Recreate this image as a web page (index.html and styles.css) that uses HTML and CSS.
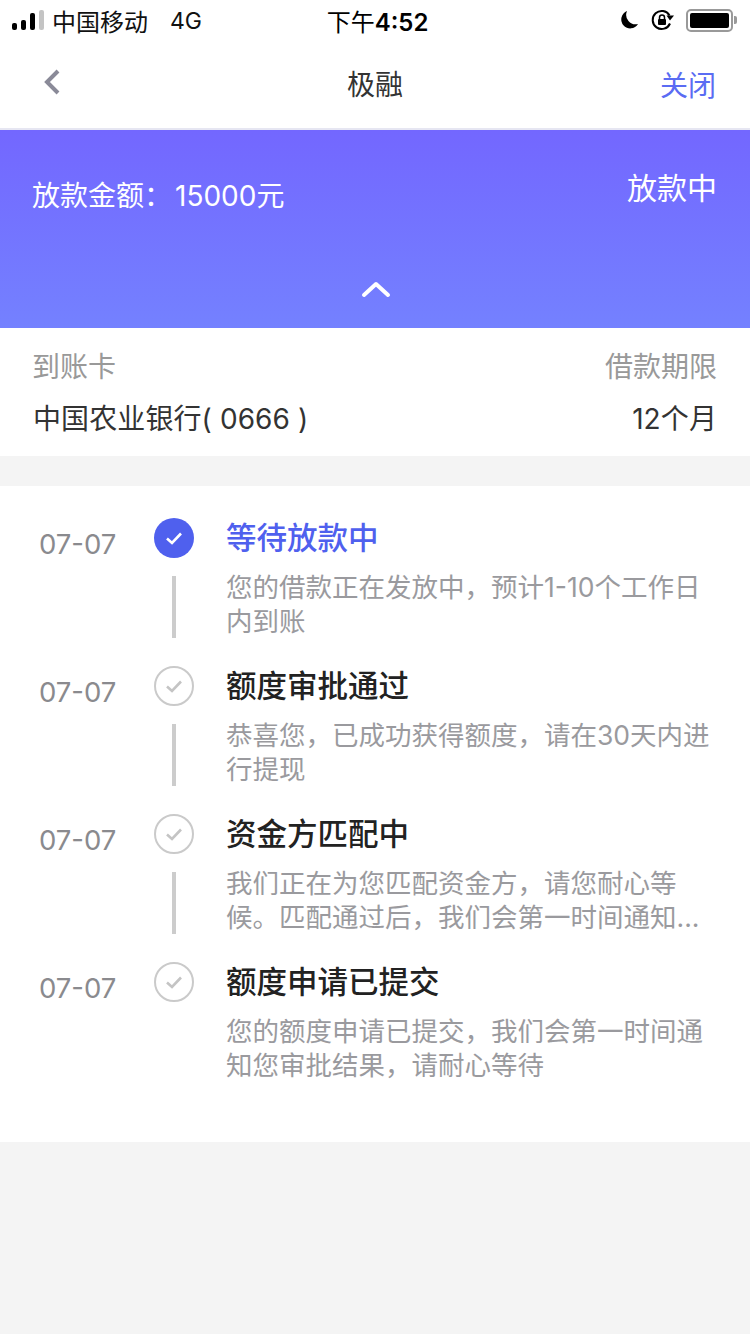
FILE: index.html
```html
<!DOCTYPE html>
<html lang="zh-CN">

<head>
    <meta charset="UTF-8">
    <meta name="viewport" content="width=device-width, initial-scale=1.0">
    <title>极融</title>
    <link rel="stylesheet" href="styles.css">
</head>

<body>
    <div class="status-bar">
        <div class="status-left">
            <svg class="signal" width="33" height="20" viewBox="0 0 33 20">
                <rect x="0" y="13" width="5" height="7" rx="2" fill="#000" />
                <rect x="9" y="10" width="5" height="10" rx="2" fill="#000" />
                <rect x="18" y="3" width="5" height="17" rx="2" fill="#000" />
                <rect x="27" y="0" width="5" height="20" rx="2" fill="#c4c4c4" />
            </svg>
            <span class="carrier">中国移动</span>
            <span class="network">4G</span>
        </div>
        <div class="status-time">下午<span class="time-num">4:52</span></div>
        <div class="status-right">
            <svg class="moon" width="18" height="20" viewBox="0 0 18 20">
                <path d="M7 1 A9 9 0 1 0 18 14 A9.5 9.5 0 0 1 7 1 Z" fill="#000" />
            </svg>
            <svg width="24" height="22" viewBox="0 0 24 22">
                <path d="M19 14.5 A9 9 0 1 1 18.5 6.5" fill="none" stroke="#000" stroke-width="2" />
                <path d="M15.5 6.5 L23 6.5 L19 11.5 Z" fill="#000" />
                <rect x="7" y="10" width="8" height="6" rx="1" fill="#000" />
                <path d="M8.5 10 V8.5 a2.5 2.5 0 0 1 5 0 V10" fill="none" stroke="#000" stroke-width="1.5" />
            </svg>
            <div class="battery">
                <div class="battery-body">
                    <div class="battery-fill"></div>
                </div>
                <div class="battery-tip"></div>
            </div>
        </div>
    </div>

    <div class="nav-bar">
        <svg class="nav-back" width="18" height="28" viewBox="0 0 18 28">
            <path d="M15 3 L4 14 L15 25" fill="none" stroke="#8a8a98" stroke-width="4" />
        </svg>
        <div class="nav-title">极融</div>
        <div class="nav-close">关闭</div>
    </div>

    <div class="banner">
        <div class="banner-top">
            <div class="amount">放款金额：<span class="amount-num">15000元</span></div>
            <div class="banner-status">放款中</div>
        </div>
        <svg class="banner-arrow" width="30" height="18" viewBox="0 0 30 18">
            <path d="M3 15 L15 4 L27 15" fill="none" stroke="#fff" stroke-width="4" stroke-linecap="round" stroke-linejoin="round" />
        </svg>
    </div>

    <div class="card-info">
        <div class="info-row info-label">
            <span>到账卡</span>
            <span>借款期限</span>
        </div>
        <div class="info-row info-value">
            <span>中国农业银行( 0666 )</span>
            <span>12个月</span>
        </div>
    </div>

    <div class="timeline">
        <div class="step step-active">
            <div class="step-date">07-07</div>
            <div class="step-mark">
                <svg class="check" width="40" height="40" viewBox="0 0 40 40">
                    <circle cx="20" cy="20" r="20" fill="#4f60ee" />
                    <path d="M13 20.5 L18 25 L27 15.5" fill="none" stroke="#fff" stroke-width="2.6" />
                </svg>
                <div class="step-line"></div>
            </div>
            <div class="step-body">
                <div class="step-title">等待放款中</div>
                <div class="step-desc">您的借款正在发放中，预计1-10个工作日<br>内到账</div>
            </div>
        </div>
        <div class="step">
            <div class="step-date">07-07</div>
            <div class="step-mark">
                <svg class="check" width="40" height="40" viewBox="0 0 40 40">
                    <circle cx="20" cy="20" r="19" fill="#fff" stroke="#cacaca" stroke-width="2" />
                    <path d="M13 20.5 L18 25 L27 15.5" fill="none" stroke="#c4c4c4" stroke-width="2.6" />
                </svg>
                <div class="step-line"></div>
            </div>
            <div class="step-body">
                <div class="step-title">额度审批通过</div>
                <div class="step-desc">恭喜您，已成功获得额度，请在30天内进<br>行提现</div>
            </div>
        </div>
        <div class="step">
            <div class="step-date">07-07</div>
            <div class="step-mark">
                <svg class="check" width="40" height="40" viewBox="0 0 40 40">
                    <circle cx="20" cy="20" r="19" fill="#fff" stroke="#cacaca" stroke-width="2" />
                    <path d="M13 20.5 L18 25 L27 15.5" fill="none" stroke="#c4c4c4" stroke-width="2.6" />
                </svg>
                <div class="step-line"></div>
            </div>
            <div class="step-body">
                <div class="step-title">资金方匹配中</div>
                <div class="step-desc">我们正在为您匹配资金方，请您耐心等<br>候。匹配通过后，我们会第一时间通知...</div>
            </div>
        </div>
        <div class="step">
            <div class="step-date">07-07</div>
            <div class="step-mark">
                <svg class="check" width="40" height="40" viewBox="0 0 40 40">
                    <circle cx="20" cy="20" r="19" fill="#fff" stroke="#cacaca" stroke-width="2" />
                    <path d="M13 20.5 L18 25 L27 15.5" fill="none" stroke="#c4c4c4" stroke-width="2.6" />
                </svg>
            </div>
            <div class="step-body">
                <div class="step-title">额度申请已提交</div>
                <div class="step-desc">您的额度申请已提交，我们会第一时间通<br>知您审批结果，请耐心等待</div>
            </div>
        </div>
    </div>
</body>

</html>
```

FILE: styles.css
```css
* {
    box-sizing: border-box;
}

body {
    font-family: 'Inter', 'Noto Sans CJK SC', sans-serif;
    background-color: #f4f4f4;
    margin: 0;
    padding: 0;
    width: 750px;
    height: 1334px;
    overflow: hidden;
}

.status-bar {
    height: 40px;
    background-color: #fff;
    display: flex;
    align-items: center;
    justify-content: space-between;
    padding: 0 13px 0 12px;
    position: relative;
}

.status-left {
    display: flex;
    align-items: center;
    font-size: 24px;
    color: #111;
}

.signal {
    margin-right: 8px;
}

.carrier {
    margin-left: -1px;
}

.network {
    margin-left: 22px;
    font-size: 23px;
    padding-top: 2px;
}

.status-time {
    position: absolute;
    left: 5px;
    right: 0;
    text-align: center;
    font-size: 24px;
    color: #000;
}

.time-num {
    font-weight: 600;
    font-size: 24px;
}

.status-right {
    display: flex;
    align-items: center;
    gap: 11px;
}

.moon {
    margin-right: 2px;
}

.battery {
    display: flex;
    align-items: center;
}

.battery-body {
    width: 47px;
    height: 23px;
    border: 2px solid #999;
    border-radius: 5px;
    padding: 2px;
}

.battery-fill {
    width: 100%;
    height: 100%;
    background-color: #000;
    border-radius: 2px;
}

.battery-tip {
    width: 3px;
    height: 8px;
    margin-left: 1px;
    background-color: #999;
    border-radius: 0 2px 2px 0;
}

.nav-bar {
    height: 88px;
    background-color: #fff;
    display: flex;
    align-items: center;
    justify-content: space-between;
    padding: 0 34px 0 43px;
    position: relative;
}

.nav-back {
    margin-bottom: 4px;
}

.nav-title {
    position: absolute;
    left: 0;
    right: 0;
    text-align: center;
    font-size: 28px;
    color: #333;
    padding-bottom: 2px;
}

.nav-close {
    font-size: 28px;
    color: #5a6cf3;
}

.banner {
    height: 200px;
    border-top: 2px solid #e6e6f2;
    background: linear-gradient(180deg, #7367ff 0%, #7481ff 100%);
    color: #fff;
    padding: 40px 33px 0 32px;
    position: relative;
}

.banner-top {
    display: flex;
    justify-content: space-between;
    align-items: flex-start;
}

.amount {
    font-size: 28px;
    line-height: 52px;
}

.amount-num {
    margin-left: 3px;
}

.banner-status {
    font-size: 30px;
    line-height: 36px;
}

.banner-arrow {
    position: absolute;
    left: 361px;
    top: 150px;
}

.card-info {
    background-color: #fff;
    height: 128px;
    padding: 20px 33px 0 32px;
}

.info-row {
    display: flex;
    justify-content: space-between;
    font-size: 28px;
}

.info-label {
    color: #999;
    line-height: 38px;
}

.info-value {
    color: #333;
    line-height: 38px;
    margin-top: 14px;
    padding-left: 1px;
    letter-spacing: 0.1px;
}

.timeline {
    margin-top: 30px;
    height: 656px;
    background-color: #fff;
    padding-top: 32px;
}

.step {
    display: flex;
    height: 148px;
}

.step-date {
    width: 154px;
    padding: 7px 0 0 39px;
    font-size: 27.5px;
    line-height: 38px;
    color: #8a8a8e;
}

.step-mark {
    width: 40px;
    display: flex;
    flex-direction: column;
    align-items: center;
}

.check {
    flex-shrink: 0;
}

.step-line {
    width: 4px;
    height: 62px;
    margin-top: 18px;
    background-color: #ccc;
}

.step-body {
    margin-left: 32px;
}

.step-title {
    font-size: 30.5px;
    font-weight: 500;
    line-height: 40px;
    color: #222;
}

.step-active .step-title {
    color: #4f60ee;
}

.step-desc {
    margin-top: 12px;
    font-size: 26.5px;
    line-height: 34px;
    color: #9a9a9e;
}
```
